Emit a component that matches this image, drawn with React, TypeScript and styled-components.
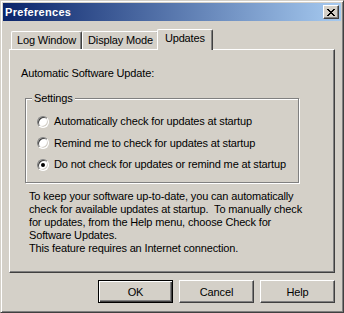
import styled, { createGlobalStyle } from "styled-components";

const GlobalStyle = createGlobalStyle`
    html, body {
        margin: 0;
        padding: 0;
        background: #d4d0c8;
    }
    * {
        box-sizing: border-box;
    }
`;

// outer dialog frame, classic raised 3d border
const Window = styled.div`
    width: 344px;
    height: 313px;
    display: flex;
    flex-direction: column;
    padding: 2px;
    background: #d4d0c8;
    border: 1px solid;
    border-color: #d4d0c8 #404040 #404040 #d4d0c8;
    box-shadow: inset 1px 1px #ffffff, inset -1px -1px #808080;
    font-family: "Liberation Sans", Arial, sans-serif;
    font-size: 11px;
    line-height: 13px;
    letter-spacing: -0.15px;
    color: #000;
`;

const TitleBar = styled.div`
    height: 18px;
    flex: none;
    display: flex;
    align-items: center;
    justify-content: space-between;
    padding: 0 2px 0 2px;
    background: linear-gradient(to right, #0a246a, #a6caf0);
`;

const Title = styled.span`
    color: #ffffff;
    font-weight: bold;
    font-size: 11px;
    letter-spacing: 0.3px;
`;

const CloseButton = styled.button`
    width: 16px;
    height: 14px;
    padding: 0;
    display: flex;
    align-items: center;
    justify-content: center;
    background: #d4d0c8;
    border: 1px solid;
    border-color: #ffffff #404040 #404040 #ffffff;
    box-shadow: inset -1px -1px #808080;
`;

const Body = styled.div`
    flex: 1;
    display: flex;
    flex-direction: column;
    padding: 8px 6px 7px 6px;
`;

const TabStrip = styled.div`
    height: 20px;
    display: flex;
    align-items: flex-end;
    padding-left: 2px;
`;

// tabs: selected one is taller, wider and covers the panel edge
const Tab = styled.div<{ $active?: boolean }>`
    position: relative;
    height: ${(p) => (p.$active ? "21px" : "18px")};
    margin: ${(p) => (p.$active ? "0 -2px -1px -2px" : "0")};
    padding: 2px ${(p) => (p.$active ? "7px" : "5px")} 0;
    z-index: ${(p) => (p.$active ? 1 : 0)};
    background: #d4d0c8;
    border-top: 1px solid #ffffff;
    border-left: 1px solid #ffffff;
    border-right: 1px solid #404040;
    border-radius: 2px 2px 0 0;
    box-shadow: inset -1px 0 #808080;
    white-space: nowrap;
`;

const Panel = styled.div`
    flex: 1;
    display: flex;
    flex-direction: column;
    padding: 17px 11px 0 11px;
    border: 1px solid;
    border-color: #ffffff #404040 #404040 #ffffff;
    box-shadow: inset -1px -1px #808080;
`;

const GroupBox = styled.div`
    position: relative;
    width: 274px;
    margin: 18px 0 0 4px;
    padding: 12px 0 6px 11px;
    border: 1px solid #808080;
    box-shadow: inset 1px 1px #ffffff, 1px 1px #ffffff;
`;

const Legend = styled.span`
    position: absolute;
    top: -7px;
    left: 6px;
    padding: 0 2px;
    background: #d4d0c8;
`;

const RadioRow = styled.label`
    height: 21.5px;
    display: flex;
    align-items: center;
    gap: 5px;
`;

const RadioDot = styled.span<{ $checked?: boolean }>`
    width: 12px;
    height: 12px;
    flex: none;
    display: flex;
    align-items: center;
    justify-content: center;
    border-radius: 50%;
    border: 1px solid;
    border-color: #808080 #ffffff #ffffff #808080;
    box-shadow: inset 1px 1px #404040, inset -1px -1px #d4d0c8;
    background: #ffffff;

    &::after {
        content: "";
        width: 4px;
        height: 4px;
        border-radius: 50%;
        background: ${(p) => (p.$checked ? "#000" : "transparent")};
    }
`;

const Note = styled.p`
    margin: 7px 0 0 8px;
    white-space: pre;
`;

const ButtonRow = styled.div`
    display: flex;
    justify-content: flex-end;
    gap: 6px;
    margin-top: 7px;
`;

const DialogButton = styled.button<{ $default?: boolean }>`
    width: 75px;
    height: 23px;
    padding: 0;
    background: #d4d0c8;
    font-family: "Liberation Sans", Arial, sans-serif;
    font-size: 11px;
    letter-spacing: -0.15px;
    color: #000;
    border: 1px solid;
    border-color: ${(p) =>
        p.$default ? "#000" : "#ffffff #404040 #404040 #ffffff"};
    box-shadow: ${(p) =>
        p.$default
            ? "inset 1px 1px #ffffff, inset -1px -1px #404040, inset -2px -2px #808080"
            : "inset -1px -1px #808080"};
`;

const CloseGlyph = () => (
    <svg width="8" height="7" viewBox="0 0 8 7" shapeRendering="crispEdges">
        <path
            fill="#000"
            d="M0 0h2v1H0zM6 0h2v1H6zM1 1h2v1H1zM5 1h2v1H5zM2 2h4v1H2zM3 3h2v1H3zM2 4h4v1H2zM1 5h2v1H1zM5 5h2v1H5zM0 6h2v1H0zM6 6h2v1H6z"
        />
    </svg>
);

const options = [
    "Automatically check for updates at startup",
    "Remind me to check for updates at startup",
    "Do not check for updates or remind me at startup",
];

export default function App() {
    const selected = 2;

    return (
        <>
            <GlobalStyle />
            <Window>
                <TitleBar>
                    <Title>Preferences</Title>
                    <CloseButton aria-label="Close">
                        <CloseGlyph />
                    </CloseButton>
                </TitleBar>

                <Body>
                    <TabStrip>
                        <Tab>Log Window</Tab>
                        <Tab>Display Mode</Tab>
                        <Tab $active>Updates</Tab>
                    </TabStrip>

                    <Panel>
                        <div>Automatic Software Update:</div>

                        {/* Settings group */}
                        <GroupBox>
                            <Legend>Settings</Legend>
                            {options.map((text, i) => (
                                <RadioRow key={text}>
                                    <RadioDot $checked={i === selected} />
                                    {text}
                                </RadioRow>
                            ))}
                        </GroupBox>

                        <Note>
                            {"To keep your software up-to-date, you can automatically\n" +
                                "check for available updates at startup.  To manually check\n" +
                                "for updates, from the Help menu, choose Check for\n" +
                                "Software Updates.\n" +
                                "This feature requires an Internet connection."}
                        </Note>
                    </Panel>

                    <ButtonRow>
                        <DialogButton $default>OK</DialogButton>
                        <DialogButton>Cancel</DialogButton>
                        <DialogButton>Help</DialogButton>
                    </ButtonRow>
                </Body>
            </Window>
        </>
    );
}
